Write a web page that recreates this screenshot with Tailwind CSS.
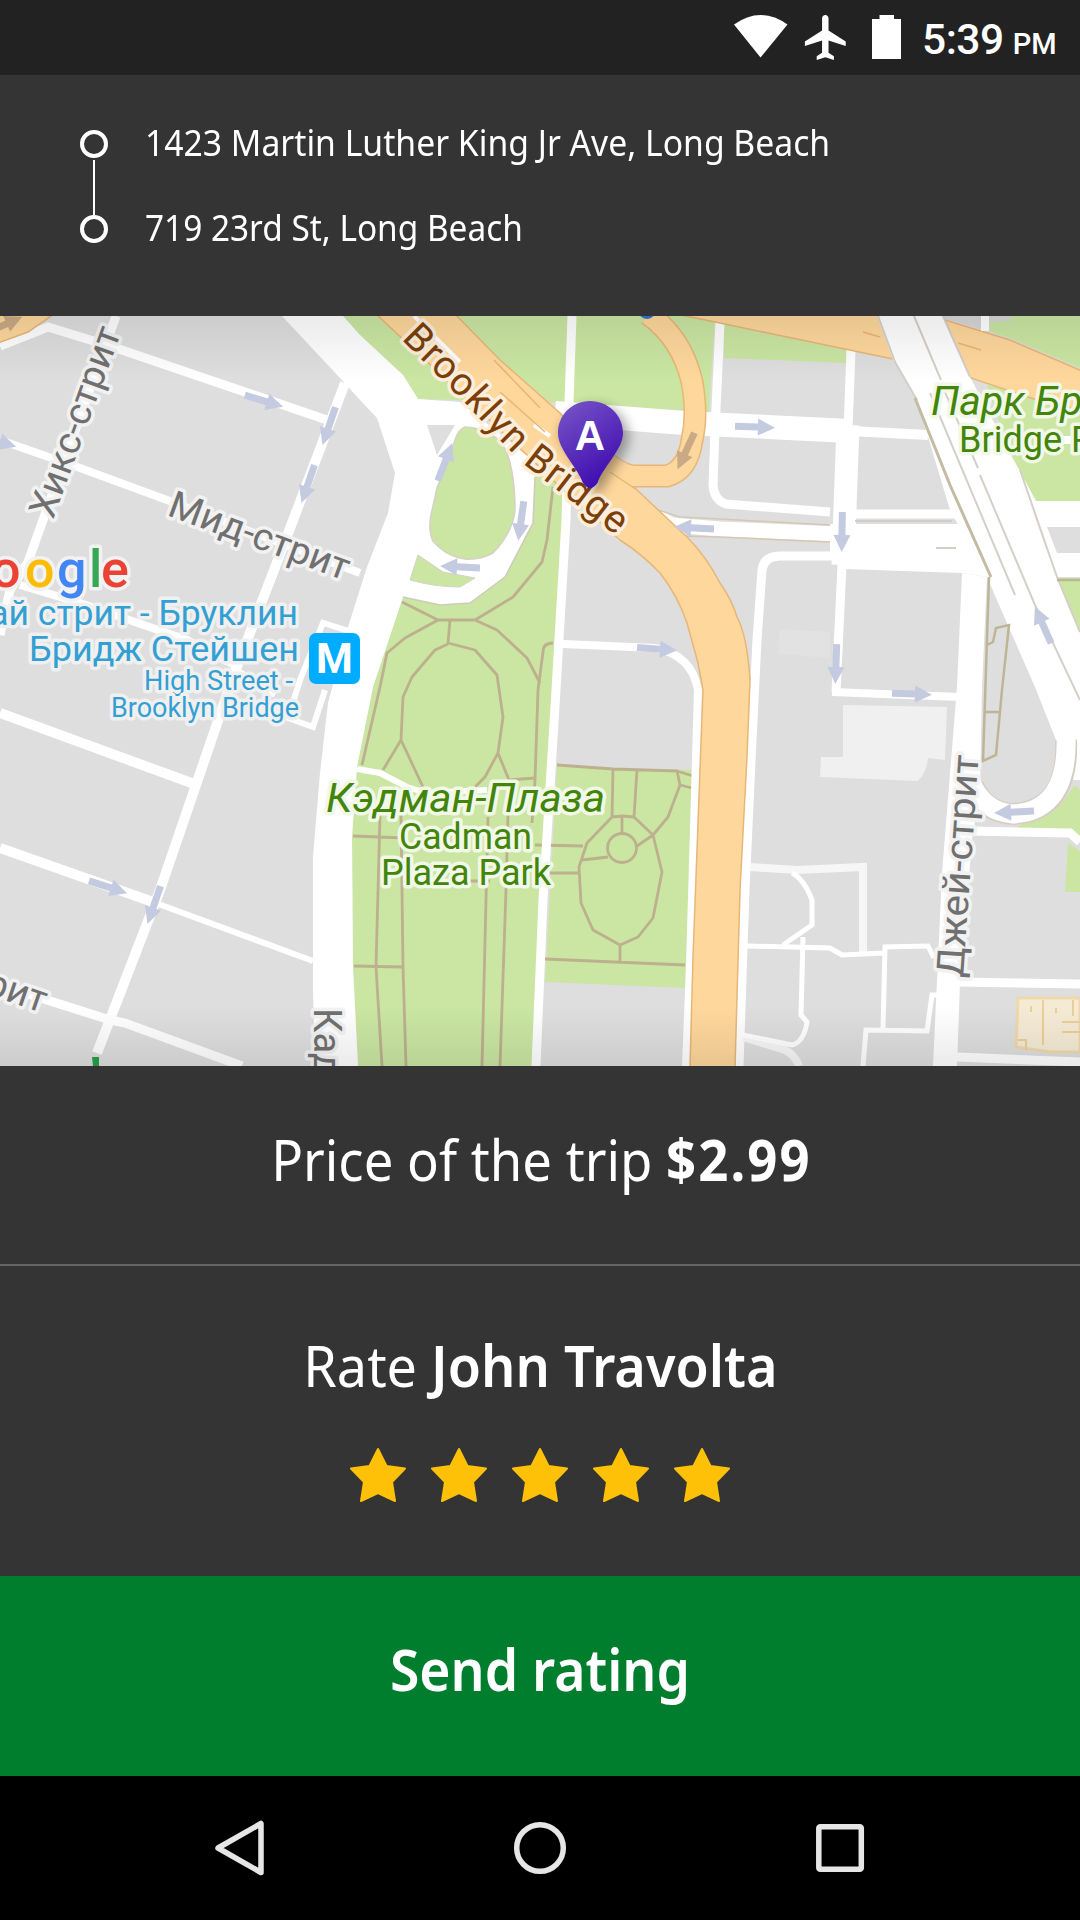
<!DOCTYPE html>
<html lang="en">
<head>
<meta charset="utf-8">
<title>Rate your trip</title>
<script src="https://cdn.jsdelivr.net/npm/@tailwindcss/browser@4"></script>
</head>
<body class="bg-black">
<div class="flex h-[1920px] w-[1080px] flex-col overflow-hidden bg-[#343434] font-['Noto_Sans',sans-serif] text-white">

  <!-- Status bar -->
  <header class="flex h-[75px] shrink-0 items-start justify-end bg-[#222] pr-[24px] font-['Roboto',sans-serif] font-medium">
    <svg class="h-[75px] w-[190px] shrink-0" viewBox="730 0 190 75" fill="#fff">
      <path d="M734 24.500Q760.500 5.500 787.500 24.500L760.500 57.500Z"/>
      <path transform="translate(799.500 10.500) scale(2.150 2.220)" d="M21.500 16v-2l-8-5V3.500c0-.83-.67-1.500-1.500-1.500s-1.500.67-1.500 1.500V9l-8 5v2l8-2.500V19l-2.500 1.600v1.700l4-1.200 4 1.200v-1.700L13.500 19v-5.500z"/>
      <path d="M879.500 15h14.500v4h7v40h-29V19h7.500z"/>
    </svg>
    <div class="flex w-[136px] items-baseline gap-[9px] whitespace-nowrap pt-[15px] pl-[2px] leading-[50px]"><span class="text-[42.500px] tracking-[-0.5px]">5:39</span><span class="text-[29px]">PM</span></div>
  </header>

  <!-- Route -->
  <section class="flex h-[241px] shrink-0 pl-[80px]">
    <div class="flex w-[28px] flex-col items-center pt-[55px]">
      <div class="size-[28px] shrink-0 rounded-full border-4 border-white"></div>
      <div class="mt-[2px] h-[55px] w-[2px] shrink-0 bg-white"></div>
      <div class="size-[28px] shrink-0 rounded-full border-4 border-white"></div>
    </div>
    <div class="flex flex-col gap-[35px] pt-[43px] pl-[37px] text-[36px] leading-[50px] whitespace-nowrap">
      <div class="w-max origin-left scale-x-[.936]">1423 Martin Luther King Jr Ave, Long Beach</div>
      <div class="w-max origin-left scale-x-[.927]">719 23rd St, Long Beach</div>
    </div>
  </section>

  <!-- Map -->
  <svg class="h-[750px] w-[1080px] shrink-0 font-['Roboto',sans-serif]" viewBox="0 316 1080 750">
    <defs>
      <linearGradient id="top" x1="0" y1="0" x2="0" y2="1"><stop offset="0" stop-color="#000" stop-opacity=".08"/><stop offset="1" stop-color="#000" stop-opacity="0"/></linearGradient>
      <linearGradient id="bottom" x1="0" y1="1" x2="0" y2="0"><stop offset="0" stop-color="#000" stop-opacity=".08"/><stop offset="1" stop-color="#000" stop-opacity="0"/></linearGradient>
      <linearGradient id="pin" x1="0" y1="0" x2=".5" y2="1"><stop offset=".1" stop-color="#7350c6"/><stop offset="1" stop-color="#410eb0"/></linearGradient>
      <filter id="blur" x="-50%" y="-50%" width="200%" height="200%"><feGaussianBlur stdDeviation="6"/></filter>
      <path id="arrow" d="M-20 -3.500H3V-8.500L20 0L3 8.500V3.500H-20Z"/>
      <path id="bridge" d="M401 339L466 404Q496 437 526 466L636 551"/>
    </defs>
    <rect y="316" width="1080" height="750" fill="#dedede"/>

    <!-- Parks -->
    <g fill="#cae6a2">
      <path d="M343 316L360 335 403 375 418 399 570 403 709 412 715 316Z"/>
      <path d="M724 318V358L846 363V320Z"/>
      <path d="M403 597L373 687 357 767 352 837 353 967 358 1066H532L552 690 562 520V470H535L533 523 505 577 470 603 440 605Z"/>
      <path d="M557 767L693 770 685 988 545 982Z"/>
      <path d="M987 385L1080 405V502H1035L1010 453Z"/>
      <path d="M1056 578H1080V632Z"/>
      <path d="M1075 785L1080 790V836L1017 827 1060 805ZM1068 843L1080 851V892H1065Z"/>
    </g>

    <!-- Left streets -->
    <g fill="none" stroke="#fff" stroke-width="9">
      <path d="M0 346L48 327 113 347 327 420"/>
      <path d="M116 316L28 562 10 590 0 635"/>
      <path d="M0 440L80 468 167 500 360 573" stroke-width="8"/>
      <path d="M345 383L292 523 233 677 160 890 97 1053" stroke-width="10"/>
      <path d="M20 585L80 603 187 640 240 668" stroke-width="8"/>
      <path d="M0 713L197 785M0 848L153 902" stroke-width="10"/>
      <path d="M153 902L313 961" stroke-width="6"/>
      <path d="M0 985L110 1020 125 1023 242 1066"/>
      <path d="M352 632L323 623 300 680 288 718 313 727 325 690M275 695L240 672" stroke-width="6"/>
    </g>

    <!-- Main avenue and park loop -->
    <path fill="#fff" d="M282 316L340 378 360 400 377 418 395 473 388 513 367 567 348 627 328 703 320 773 313 857V990L315 1066H358L353 967 352 837 357 767 373 687 403 597 440 605 470 603 505 577 533 523 535 477 530 458 460 402 418 399 403 375 360 335 343 316Z"/>
    <path fill="#dedede" d="M427 425H455L437 455Z"/>
    <path fill="#cae6a2" stroke="#d6d1c4" stroke-width="1.500" d="M465 427Q497 429 507 453Q515 475 515 510Q513 532 493 553Q480 560 465 559Q447 557 433 541Q428 530 431 515L437 488 455 440Q458 430 465 427Z"/>
    <path fill="#cae6a2" stroke="#d6d1c4" stroke-width="1" d="M418 555L443 572 475 578 460 587Q435 587 410 580Z"/>
    <path fill="none" stroke="#d0cabb" stroke-width="1.500" d="M403 597L440 605 470 603 505 577 533 523 535 477"/>

    <!-- Park paths -->
    <g fill="none" stroke="#bdb08e" stroke-width="2.800" stroke-linejoin="round">
      <path d="M553 487L547 540 542 562 513 597 475 620H438L402 602M438 620L405 638 387 653 380 687 362 765M475 620L497 630 527 658 540 683M538 690L535 780 532 823M553 643Q543 643 543 652L538 690"/>
      <path d="M450 620L448 643 475 650 497 675 503 717 498 753 485 777 475 787M448 644L435 650 412 677 403 697 401 740 423 787M401 740L383 770M498 753L509 780 535 778"/>
      <path d="M380 815L376 967 382 1066M401 815L403 967 406 1066M488 817L482 1066M508 815L506 890 500 1066M353 836L405 838M354 966L403 967M440 881H490M535 845L583 846M550 873H578"/>
      <path d="M557 765L613 769 677 771 693 776M613 769L612 817 587 843 579 867 581 903 593 930 620 945 638 937 653 918 662 872 653 835 634 817 622 816 612 817M637 770L634 817M622 816V833M637 846L653 835 668 817 680 785 677 771M680 785L692 788M582 860L608 857M620 945V962M545 959L685 965"/>
      <circle cx="622" cy="848" r="14.500"/>
    </g>
    <path fill="none" stroke="#fff" stroke-width="6" d="M357 769L380 773 407 787 427 793 487 790"/>

    <!-- Central and eastern streets -->
    <g fill="none" stroke="#fff" stroke-width="9">
      <path d="M572 316L569 402 566 520 556 690 543 900 536 1066"/>
      <path d="M563 644L655 648Q692 655 698 690L690 966 686 1066" stroke-width="8"/>
      <path d="M555 413L684 423 850 431" stroke-width="24"/>
      <path d="M850 431L928 435" stroke-width="10"/>
      <path d="M720 323L715 430 713 485Q714 500 726 504L830 512"/>
      <path d="M851 350L848 430"/>
      <path d="M848 425L843 565" stroke-width="23"/>
      <path d="M650 513L672 525 720 529 840 534" stroke-width="15"/>
      <path d="M843 514H960"/>
      <path d="M842 565L836 692"/>
      <path d="M832 692L960 697" stroke-width="8"/>
      <path d="M739 1066L745 890 752 740 757 640 762 570Q764 556 780 556H840"/>
      <path d="M970 831L1070 833 1080 842M960 982L1080 984M957 1057L1080 1062"/>
      <path d="M1060 440H1080" stroke-width="8"/>
    </g>
    <path fill="#fff" d="M830 524H965L987 577 962 573 845 569 830 558Z"/>
    <path fill="none" stroke="#d3cfc8" stroke-width="2" d="M855 521H952M936 548H956"/>
    <path fill="none" stroke="#d6c7b4" stroke-width="1.500" d="M652 508L680 517 720 519 830 525M680 536L720 537 830 542"/>
    <path fill="#f0f0f0" d="M843 705L947 707 945 760 928 758Q927 772 918 781L820 777 821 757H843Z"/>
    <path fill="#e2e2e2" d="M780 629L830 632V658L778 654Z"/>
    <g fill="none" stroke="#f6f6f6" stroke-width="8">
      <path d="M750 867L797 870 863 867V953"/><path d="M743 1037L785 1050Q795 1055 799 1066"/>
    </g>
    <g fill="none" stroke="#fff" stroke-width="5">
      <path d="M792 873Q804 879 812 900V925L783 945M747 946L830 948 842 955 883 953M803 937L801 1015 807 1022Q804 1042 792 1045L743 1035M883 1028L885 947 928 946 934 958M863 1066L866 1030 927 1031 932 995H938"/>
    </g>
    <path fill="#f5ebd5" stroke="#eed9ad" stroke-width="3" d="M1018 998H1080V1052H1050L1016 1047Z"/>
    <path fill="none" stroke="#ebcf98" stroke-width="2" d="M1043 1000V1045M1031 1006V1012M1056 1008V1013M1018 1040H1026V1050M1062 1022H1080M1062 1032H1080M1073 1000V1016"/>

    <!-- Elevated roads -->
    <g fill="#fed79c" stroke="#e8b677" stroke-width="1.500">
      <path d="M-2 314H54L28 332 -2 343Z"/>
      <path d="M676 314L720 323 893 359 880 314Z"/>
      <path d="M945 320L1010 340 1082 371V411L1037 400 968 377Z"/>
    </g>
    <path fill="#cae6a2" d="M988 331L1010 338 1080 368V316H1010V321H988Z"/>
    <path fill="#d6d6d6" d="M943 316H1011V321L990 322V331L948 320Z"/>
    <path fill="none" stroke="#fff" stroke-width="8" d="M985 316V331"/>
    <path fill="none" stroke="#e8b677" stroke-width="23" d="M648 314Q682 338 692 382Q698 415 692 440Q688 470 667 476H633Q620 474 608 464"/>
    <path fill="#fed79c" stroke="#e8b677" stroke-width="1.500" d="M376 314L527 455 560 487 620 540 Q642 554 660 573Q678 596 687 623L698 663 703 690 693 957 690 1068H735L740 890 747 757 750 680Q747 635 737 617Q732 600 720 583Q706 556 687 537L637 490 600 455 560 413 500 360 455 314Z"/>
    <path fill="none" stroke="#fed79c" stroke-width="20" d="M648 314Q682 338 692 382Q698 415 692 440Q688 470 667 476H633Q620 474 604 460"/>
    <path fill="none" stroke="#fff" stroke-width="4" d="M414 316L460 362M534 425L550 436"/>
    <path fill="none" stroke="#e9b675" stroke-width="1.500" d="M494 360L540 408M500 392L545 432M610 472L637 490M863 332L880 337M958 343L981 350"/>
    <circle cx="647" cy="310" r="9" fill="#2f74cf"/>

    <!-- Highway and Jay street -->
    <path fill="#fff" d="M877 316L893 360 917 400 950 510 987 577 1010 630 1035 687 1058 745 1060 780H1080V630L1057 577 1010 453 970 377 943 316Z"/>
    <path fill="#fff" d="M962 573L987 577 982 687 980 790 972 840 960 983 957 1066H933L942 873 957 687Z"/>
    <path fill="none" stroke="#d6cec4" stroke-width="22" d="M1066 740Q1069 811 1013 814Q983 812 973 785"/>
    <path fill="none" stroke="#fff" stroke-width="19" d="M1066 735Q1069 811 1013 814Q983 812 970 780"/>
    <path fill="#fff" d="M1010 453L1036 501H1080V527H1047L1057 553H1080V577H1057Z"/>
    <path fill="none" stroke="#d6cfc8" stroke-width="2" d="M914 316L941 380M878 316L895 362 917 400M943 316L970 377M930 393L1015 595M980 475L1035 605 1080 700M1020 470L1057 577 1080 632M945 392L978 468"/>
    <path fill="none" stroke="#c3bca2" stroke-width="3" d="M915 398L950 485 991 577"/>
    <path fill="none" stroke="#bdb596" stroke-width="2.500" d="M989 577L983 761 996 755 1002 690 1009 625 996 628 993 642 987 645M984 712H1000M1057 580H1080"/>

    <!-- One-way arrows -->
    <g fill="#c4cadf">
      <use href="#arrow" transform="translate(264 401) rotate(17)"/><use href="#arrow" transform="translate(329 426) rotate(109)"/><use href="#arrow" transform="translate(308 484) rotate(109)"/><use href="#arrow" transform="translate(-3 441) rotate(17)"/>
      <use href="#arrow" transform="translate(445 462) rotate(-69)"/><use href="#arrow" transform="translate(521 521) rotate(98)"/><use href="#arrow" transform="translate(460 567) rotate(183)"/><use href="#arrow" transform="translate(694 528) rotate(183)"/>
      <use href="#arrow" transform="translate(657 649) rotate(4)"/><use href="#arrow" transform="translate(755 427) rotate(2)"/><use href="#arrow" transform="translate(842 532) rotate(91)"/><use href="#arrow" transform="translate(836 664) rotate(92)"/>
      <use href="#arrow" transform="translate(912 694) rotate(2)"/><use href="#arrow" transform="translate(1043 625) rotate(-114)"/><use href="#arrow" transform="translate(1014 812) rotate(177)"/>
      <use href="#arrow" transform="translate(108 887) rotate(18)"/><use href="#arrow" transform="translate(154 905) rotate(109)"/>
    </g>
    <g fill="#c9aa85"><use href="#arrow" transform="translate(686 451) rotate(115)"/><use href="#arrow" transform="translate(4 325) rotate(-24)"/></g>

    <!-- Labels -->
    <g stroke-linejoin="round" stroke-width="7" paint-order="stroke">
      <g fill="#707070" stroke="#f2f2f2" font-size="38">
        <text transform="translate(53 520) rotate(-70)" textLength="200" lengthAdjust="spacingAndGlyphs">Хикс-стрит</text>
        <text transform="translate(166 515) rotate(20.200)" textLength="190" lengthAdjust="spacingAndGlyphs">Мид-стрит</text>
        <text transform="translate(963 978) rotate(-86)" textLength="223" lengthAdjust="spacingAndGlyphs">Джей-стрит</text>
        <text transform="translate(42 1013) rotate(19)" text-anchor="end">рит</text>
        <text transform="translate(314 1008) rotate(90)">Кад</text>
      </g>
      <text fill="#7b3f07" stroke="#fdeedb" font-size="39"><textPath href="#bridge" textLength="292">Brooklyn Bridge</textPath></text>
      <g fill="#43850b" stroke="#f1f8e8">
        <text x="326" y="812" font-size="40" font-style="italic" textLength="279" lengthAdjust="spacingAndGlyphs">Кэдман-Плаза</text>
        <text x="399" y="849" font-size="36" textLength="133" lengthAdjust="spacingAndGlyphs">Cadman</text>
        <text x="381" y="885" font-size="36" textLength="170" lengthAdjust="spacingAndGlyphs">Plaza Park</text>
        <text x="931" y="415" font-size="41" font-style="italic">Парк Бр</text>
        <text x="959" y="452" font-size="36">Bridge P</text>
      </g>
      <g fill="#349fd2" stroke="#f0f0f0" text-anchor="end">
        <text x="298" y="625" font-size="35.500">ай стрит - Бруклин</text>
        <text x="299" y="661" font-size="35" textLength="270" lengthAdjust="spacingAndGlyphs">Бридж Стейшен</text>
        <text x="293" y="690" font-size="27" textLength="149" lengthAdjust="spacingAndGlyphs">High Street -</text>
        <text x="299" y="717" font-size="27" textLength="188" lengthAdjust="spacingAndGlyphs">Brooklyn Bridge</text>
      </g>
      <g font-size="52" font-weight="500">
        <text y="587" stroke="#f2f2f2" fill="#ea4335"><tspan x="-9">o</tspan><tspan x="25" fill="#fbbc05">o</tspan><tspan x="57" fill="#4285f4">g</tspan><tspan x="89" fill="#34a853">l</tspan><tspan x="101">e</tspan></text>
      </g>
    </g>
    <rect x="309" y="633" width="51" height="51" rx="7" fill="#00acff"/>
    <text x="334.500" y="673" font-size="42" font-weight="700" fill="#fff" text-anchor="middle">M</text>
    <path d="M92 1057h7v9h-6z" fill="#25a04a"/>

    <rect y="316" width="1080" height="65" fill="url(#top)"/>
    <rect y="1006" width="1080" height="60" fill="url(#bottom)"/>

    <!-- Pickup pin -->
    <path filter="url(#blur)" opacity=".35" d="M595 405c19 0 34 14 34 33 0 16-21 35-25 50Q600 495 592 490L560 438C560 420 576 405 595 405Z"/>
    <path fill="url(#pin)" d="M590 401C608 401 623 415 623 433C623 450 602 468 597.500 483Q590 493 583 483C578 468 558 450 558 433C558 415 572 401 590 401Z"/>
    <text x="590" y="450" font-size="42" font-weight="700" fill="#fff" text-anchor="middle" class="font-['Liberation_Sans',sans-serif]">A</text>
  </svg>

  <!-- Price -->
  <section class="flex h-[200px] shrink-0 items-start justify-center border-b-2 border-[#646464] pt-[53px] text-[57px] leading-[80px] whitespace-nowrap">
    <p class="scale-x-[.924]">Price of the trip <b class="-mr-[2px] font-bold tracking-[2.200px]">$2.99</b></p>
  </section>

  <!-- Rating -->
  <section class="flex h-[310px] shrink-0 flex-col items-center pt-[59px]">
    <p class="scale-x-[.947] text-[57px] leading-[80px] whitespace-nowrap">Rate <b class="font-semibold">John Travolta</b></p>
    <div class="mt-[42px] flex gap-[25px]">
      <svg class="h-[56px] w-[56px]" viewBox="0 0 56 56"><path id="star" fill="#ffc107" stroke="#ffc107" stroke-width="2" stroke-linejoin="round" d="M28 2L36.500 19 55 21.500 42 35 45 54 28 46 11 54 14 35 1 21.500 19.500 19Z"/></svg>
      <svg class="h-[56px] w-[56px]" viewBox="0 0 56 56"><use href="#star"/></svg>
      <svg class="h-[56px] w-[56px]" viewBox="0 0 56 56"><use href="#star"/></svg>
      <svg class="h-[56px] w-[56px]" viewBox="0 0 56 56"><use href="#star"/></svg>
      <svg class="h-[56px] w-[56px]" viewBox="0 0 56 56"><use href="#star"/></svg>
    </div>
  </section>

  <button class="flex h-[200px] shrink-0 items-start justify-center bg-[#007e2e] pt-[53px] text-[57px] leading-[80px] font-semibold whitespace-nowrap"><span class="scale-x-[.938]">Send rating</span></button>

  <!-- Navigation bar -->
  <nav class="flex h-[144px] shrink-0 items-center justify-between bg-black px-[210px]">
    <svg class="size-[60px]" viewBox="0 0 60 60" fill="none" stroke="#e6e6e6" stroke-width="5.500" stroke-linejoin="round"><path d="M51 5.500V54.500L8 30Z"/></svg>
    <svg class="size-[60px]" viewBox="0 0 60 60" fill="none" stroke="#e6e6e6" stroke-width="5.500"><circle cx="30" cy="30" r="23.300"/></svg>
    <svg class="size-[60px]" viewBox="0 0 60 60" fill="none" stroke="#e6e6e6" stroke-width="5.500" stroke-linejoin="round"><rect x="8.800" y="8.800" width="42.500" height="42.500" rx="1.500"/></svg>
  </nav>
</div>
</body>
</html>
